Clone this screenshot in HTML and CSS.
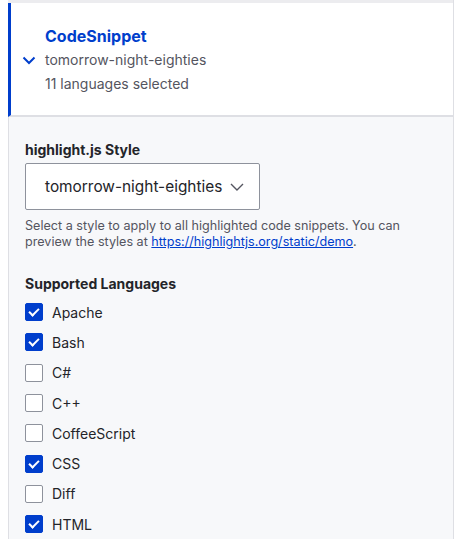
FILE: index.html
```html
<!DOCTYPE html>
<html lang="en">
<head>
<meta charset="utf-8">
<title>CodeSnippet</title>
<link rel="stylesheet" href="styles.css">
</head>
<body>
<div class="panel">
  <div class="topline"></div>
  <div class="summary">
    <svg class="chevron" width="14" height="9" viewBox="0 0 14 9"><path d="M1.5 1.5 L7 7 L12.5 1.5" fill="none" stroke="#003ecc" stroke-width="2"/></svg>
    <div class="summary-text">
      <div class="title">CodeSnippet</div>
      <div class="meta">tomorrow-night-eighties</div>
      <div class="meta">11 languages selected</div>
    </div>
  </div>
  <div class="content">
    <div class="field">
      <div class="label">highlight.js Style</div>
      <div class="select">
        <span>tomorrow-night-eighties</span>
        <svg class="select-arrow" width="14" height="8" viewBox="0 0 14 8"><path d="M1 1 L7 7 L13 1" fill="none" stroke="#545560" stroke-width="1.4"/></svg>
      </div>
      <div class="desc">
        <span class="desc-line">Select a style to apply to all highlighted code snippets. You can</span>
        <span class="desc-line">preview the styles at <a href="#">https://highlightjs.org/static/demo</a>.</span>
      </div>
    </div>
    <div class="field">
      <div class="label">Supported Languages</div>
      <ul class="checks">
        <li class="on"><span class="box"></span>Apache</li>
        <li class="on"><span class="box"></span>Bash</li>
        <li><span class="box"></span>C#</li>
        <li><span class="box"></span>C++</li>
        <li><span class="box"></span>CoffeeScript</li>
        <li class="on"><span class="box"></span>CSS</li>
        <li><span class="box"></span>Diff</li>
        <li class="on"><span class="box"></span>HTML</li>
      </ul>
    </div>
  </div>
</div>
</body>
</html>
```
FILE: styles.css
```css
html, body {
  margin: 0;
  padding: 0;
  background: #fff;
  font-family: Inter, "Noto Sans", sans-serif;
  color: #232429;
}
.panel {
  margin: 0 10px 0 8px;
  border-right: 1px solid #dedfe4;
}
.topline {
  height: 3px;
  background: #ececef;
}
.summary {
  display: flex;
  align-items: flex-start;
  background: #fff;
  border-left: 3px solid #003ecc;
  border-bottom: 2px solid #dedfe4;
  padding: 21px 0 19px 11px;
}
.chevron {
  margin-top: 32px;
  margin-right: 9px;
}
.title {
  color: #003ecc;
  font-weight: 700;
  font-size: 16px;
  line-height: 24px;
}
.meta {
  color: #545560;
  font-size: 14px;
  line-height: 24px;
}
.content {
  background: #f7f8fa;
  border-left: 1px solid #dedfe4;
  padding: 23px 16px 0 16px;
}
.field {
  margin-bottom: 24px;
}
.label {
  font-weight: 700;
  font-size: 14px;
  line-height: 20px;
  color: #232429;
  margin-bottom: 3px;
}
.select {
  display: inline-flex;
  align-items: center;
  box-sizing: border-box;
  height: 47px;
  background: #fff;
  border: 1px solid #8e929c;
  border-radius: 2px;
  padding: 0 15px 0 19px;
  font-size: 15.4px;
  color: #232429;
}
.select-arrow {
  margin-left: 8px;
}
.desc {
  margin-top: 8px;
  font-size: 12.6px;
  line-height: 16px;
  color: #545560;
}
.desc-line {
  display: block;
  white-space: nowrap;
}
.desc a {
  color: #003ecc;
}
.checks {
  list-style: none;
  margin: 0;
  padding: 0;
}
.checks li {
  display: flex;
  align-items: center;
  height: 30.3px;
  font-size: 14px;
  color: #232429;
}
.box {
  box-sizing: border-box;
  width: 18px;
  height: 18px;
  border: 1px solid #8e929c;
  border-radius: 2px;
  background: #fff;
  margin-right: 9px;
  position: relative;
}
.on .box {
  background: #003ecc;
  border-color: #003ecc;
}
.on .box::after {
  content: "";
  position: absolute;
  left: 5px;
  top: 2px;
  width: 4px;
  height: 8px;
  border: solid #fff;
  border-width: 0 2px 2px 0;
  transform: rotate(45deg);
}
```
